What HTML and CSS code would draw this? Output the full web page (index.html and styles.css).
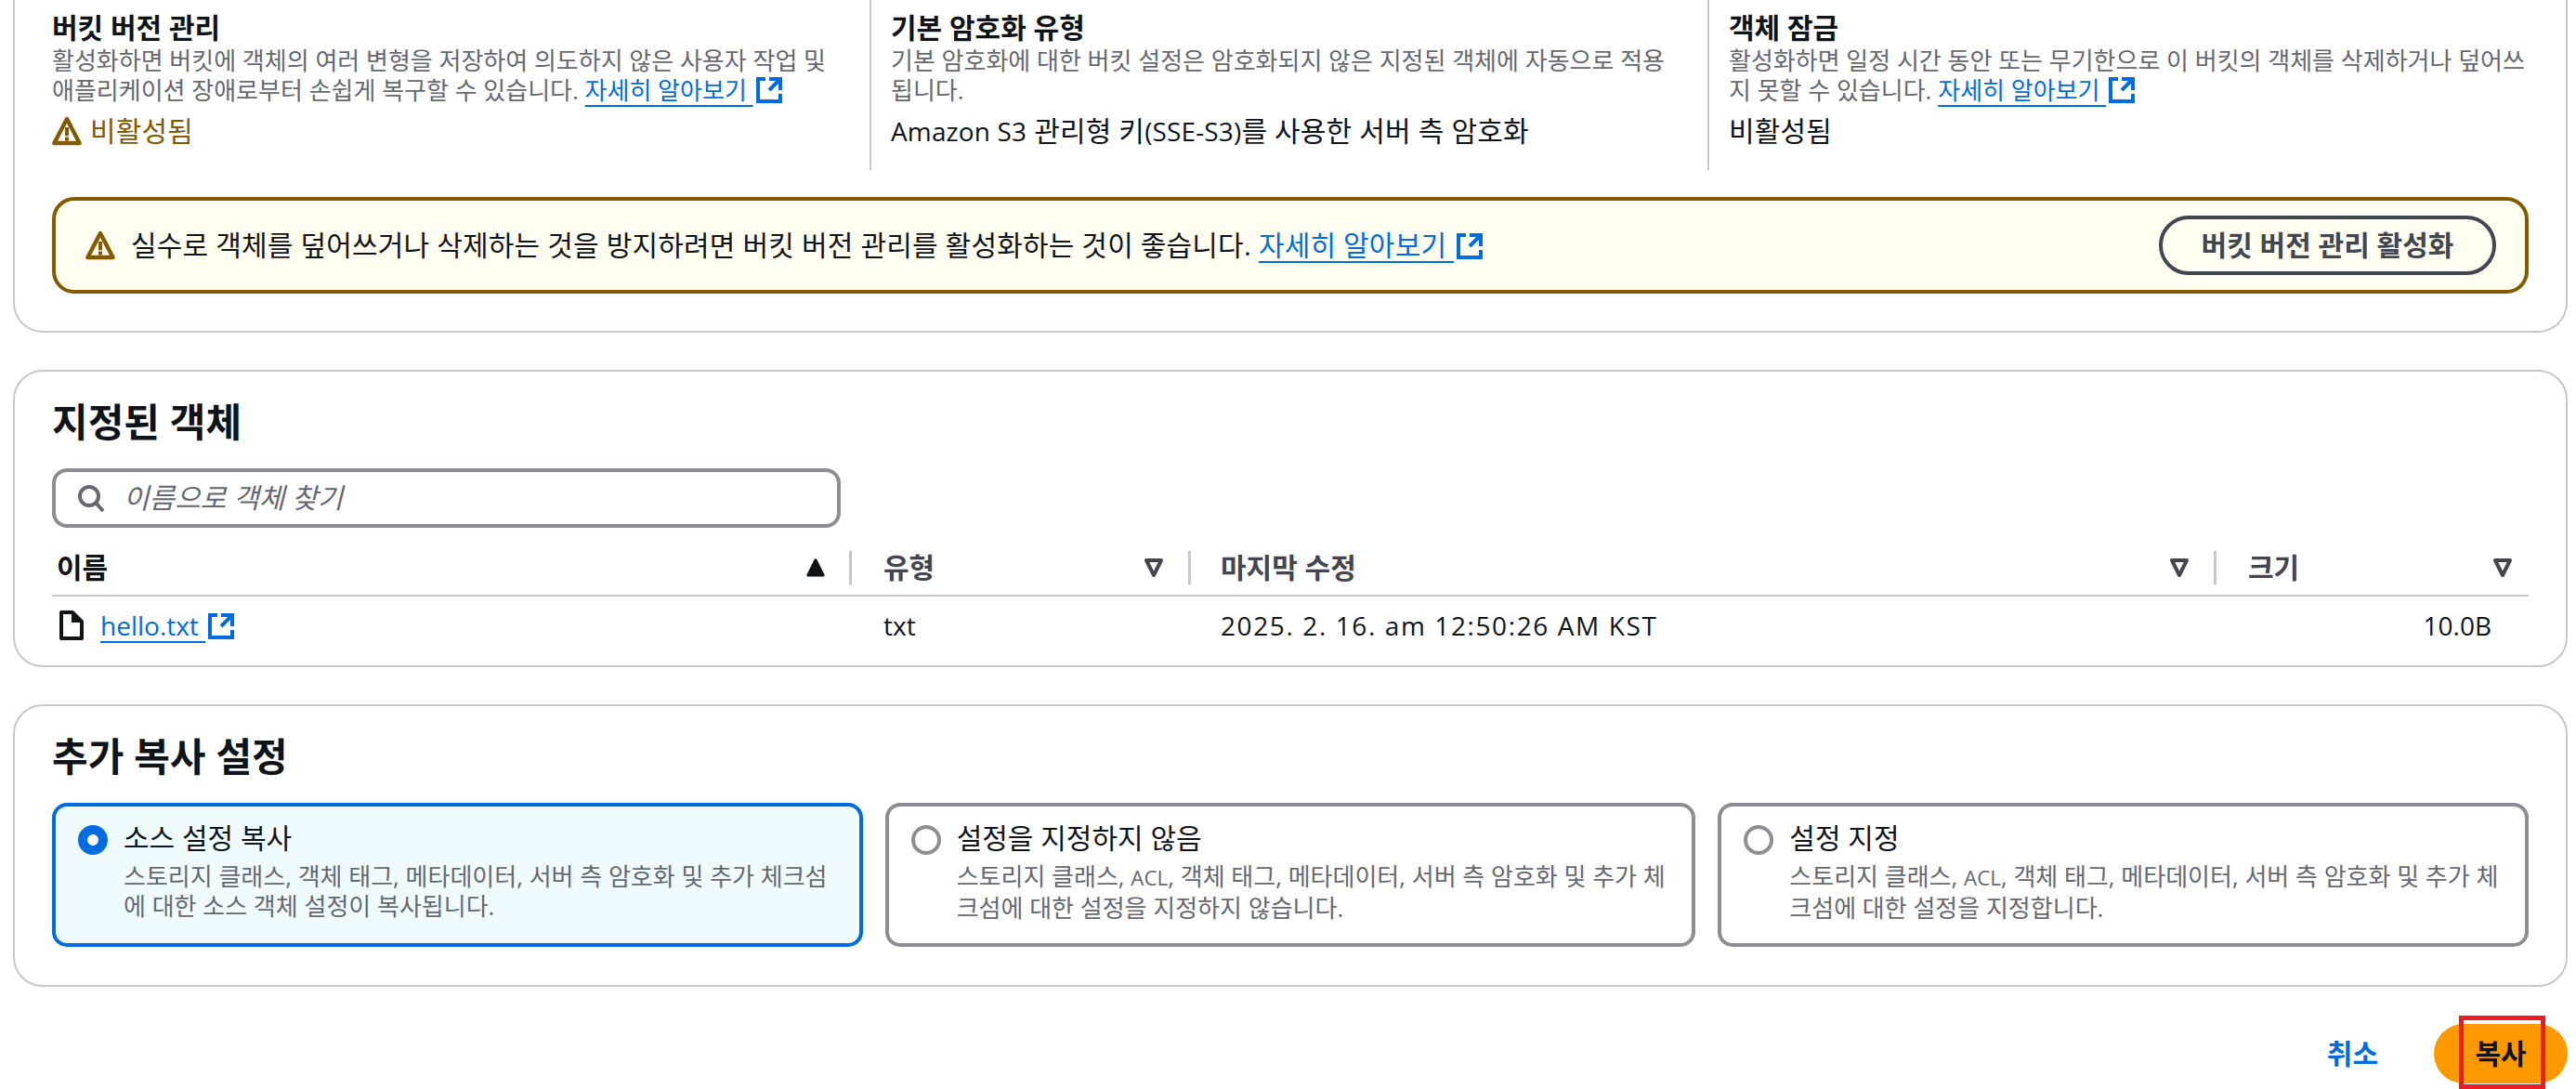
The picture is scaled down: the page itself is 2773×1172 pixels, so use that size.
FILE: index.html
```html
<!DOCTYPE html>
<html lang="ko">
<head>
<meta charset="utf-8">
<title>객체 복사</title>
<link rel="stylesheet" href="styles.css">
</head>
<body>
<svg class="sprites" width="0" height="0" aria-hidden="true">
  <defs>
    <symbol id="i-ext" viewBox="0 0 16 16"><path d="M14 8.01v-6H8M14.02 2 8 8.01M6 2.01H2v12h12v-3.99" fill="none" stroke="currentColor" stroke-width="2"/></symbol>
    <symbol id="i-warn" viewBox="0 0 16 16"><path d="m8 1.5-6.8 13h13.6L8 1.5Z" fill="none" stroke="currentColor" stroke-width="2.2" stroke-linejoin="round"/><path d="M8 6v4.6M7 12.2h2" fill="none" stroke="currentColor" stroke-width="2"/></symbol>
    <symbol id="i-up" viewBox="0 0 16 16"><path d="M8 4 4 12h8L8 4Z" fill="currentColor" stroke="currentColor" stroke-width="1.6" stroke-linejoin="round"/></symbol>
    <symbol id="i-down" viewBox="0 0 16 16"><path d="M4 4h8L8 12 4 4Z" fill="none" stroke="currentColor" stroke-width="2" stroke-linejoin="round"/></symbol>
  </defs>
</svg>
<main class="page">

  <section class="card card-clipped">
    <div class="cols">
      <div class="col">
        <h3 class="col-title">버킷 버전 관리</h3>
        <p class="muted">활성화하면 버킷에 객체의 여러 변형을 저장하여 의도하지 않은 사용자 작업 및 애플리케이션 장애로부터 손쉽게 복구할 수 있습니다. <a class="link" href="#">자세히 알아보기&nbsp;</a><svg class="ext"><use href="#i-ext"/></svg></p>
        <div class="value warn"><svg class="warn-icon"><use href="#i-warn"/></svg><span>비활성됨</span></div>
      </div>
      <div class="col col-div">
        <h3 class="col-title">기본 암호화 유형</h3>
        <p class="muted">기본 암호화에 대한 버킷 설정은 암호화되지 않은 지정된 객체에 자동으로 적용됩니다.</p>
        <div class="value"><span class="lat">Amazon S3</span> 관리형 키<span class="lat">(SSE-S3)</span>를 사용한 서버 측 암호화</div>
      </div>
      <div class="col col-div col-last">
        <h3 class="col-title">객체 잠금</h3>
        <p class="muted">활성화하면 일정 시간 동안 또는 무기한으로 이 버킷의 객체를 삭제하거나 덮어쓰지 못할 수 있습니다. <a class="link" href="#">자세히 알아보기&nbsp;</a><svg class="ext"><use href="#i-ext"/></svg></p>
        <div class="value">비활성됨</div>
      </div>
    </div>
    <div class="alert">
      <svg class="warn-icon alert-icon"><use href="#i-warn"/></svg>
      <div class="alert-text">실수로 객체를 덮어쓰거나 삭제하는 것을 방지하려면 버킷 버전 관리를 활성화하는 것이 좋습니다. <a class="link" href="#">자세히 알아보기&nbsp;</a><svg class="ext"><use href="#i-ext"/></svg></div>
      <button class="btn-normal" type="button">버킷 버전 관리 활성화</button>
    </div>
  </section>

  <section class="card card-objects">
    <h2 class="card-title">지정된 객체</h2>
    <div class="search">
      <svg class="search-icon" viewBox="0 0 16 16"><path d="M7 2a5 5 0 1 0 0 10A5 5 0 0 0 7 2ZM14.5 15l-4-4.5" fill="none" stroke="currentColor" stroke-width="2"/></svg>
      <span class="placeholder">이름으로 객체 찾기</span>
    </div>
    <div class="table">
      <div class="th th-name"><span class="th-active">이름</span><svg class="sort sort-on"><use href="#i-up"/></svg><i class="th-div"></i></div>
      <div class="th th-type"><span>유형</span><svg class="sort"><use href="#i-down"/></svg><i class="th-div"></i></div>
      <div class="th th-date"><span>마지막 수정</span><svg class="sort"><use href="#i-down"/></svg><i class="th-div"></i></div>
      <div class="th th-size"><span>크기</span><svg class="sort"><use href="#i-down"/></svg></div>
      <div class="td td-name">
        <svg class="file-icon" viewBox="0 0 16 16"><path d="M2.5 1h6l5 5v9h-11V1Z" fill="none" stroke="currentColor" stroke-width="2" stroke-linejoin="round"/><path d="M8 1.5v5h5L8 1.5Z" fill="currentColor"/></svg>
        <span class="file-link"><a class="link" href="#">hello.txt&nbsp;</a><svg class="ext"><use href="#i-ext"/></svg></span>
      </div>
      <div class="td td-type">txt</div>
      <div class="td td-date">2025. 2. 16. am 12:50:26 AM KST</div>
      <div class="td td-size">10.0B</div>
    </div>
  </section>

  <section class="card card-options">
    <h2 class="card-title">추가 복사 설정</h2>
    <div class="tiles">
      <div class="tile tile-on">
        <span class="radio radio-on"></span>
        <div class="tile-body">
          <div class="tile-title">소스 설정 복사</div>
          <p class="muted">스토리지 클래스, 객체 태그, 메타데이터, 서버 측 암호화 및 추가 체크섬에 대한 소스 객체 설정이 복사됩니다.</p>
        </div>
      </div>
      <div class="tile">
        <span class="radio"></span>
        <div class="tile-body">
          <div class="tile-title">설정을 지정하지 않음</div>
          <p class="muted">스토리지 클래스, <span class="lat">ACL</span>, 객체 태그, 메타데이터, 서버 측 암호화 및 추가 체크섬에 대한 설정을 지정하지 않습니다.</p>
        </div>
      </div>
      <div class="tile">
        <span class="radio"></span>
        <div class="tile-body">
          <div class="tile-title">설정 지정</div>
          <p class="muted">스토리지 클래스, <span class="lat">ACL</span>, 객체 태그, 메타데이터, 서버 측 암호화 및 추가 체크섬에 대한 설정을 지정합니다.</p>
        </div>
      </div>
    </div>
  </section>

  <footer class="actions">
    <a class="cancel" href="#">취소</a>
    <div class="primary-wrap">
      <button class="btn-primary" type="button">복사</button>
      <span class="highlight"></span>
    </div>
  </footer>
</main>
</body>
</html>
```
FILE: styles.css
```css
* { box-sizing: border-box; }
html, body { margin: 0; padding: 0; background: #fff; }
body {
  font-family: "Open Sans", "Noto Sans CJK KR", sans-serif;
  font-size: 30px;
  line-height: 40px;
  color: #0f141a;
  overflow: hidden;
  height: 1172px;
}
.sprites { position: absolute; }
h2, h3, p { margin: 0; }
.page { padding: 0 9px 0 14px; }
.lat { font-size: 0.933em; }
.muted .lat { font-size: 0.86em; }

.card {
  border: 2px solid #c6c6cd;
  border-radius: 32px;
  padding: 0 40px 40px;
  margin-bottom: 40px;
  background: #fff;
}
.card-clipped {
  border-top: none;
  border-radius: 0 0 32px 32px;
  height: 358px;
}
.card-objects { height: 320px; padding-top: 30px; padding-bottom: 0; }
.card-options { height: 304px; padding-top: 30px; margin-bottom: 0; }

.cols {
  display: grid;
  grid-template-columns: 880px 902px 1fr;
  height: 183px;
  margin-bottom: 29px;
}
.col { padding: 10px 40px 0 0; }
.col-div { border-left: 2px solid #c6c6cd; padding-left: 21px; }
.col-last { padding-right: 0; }
.col-title { font-size: 30px; line-height: 40px; font-weight: 700; }
.muted { font-size: 26px; line-height: 32px; color: #656871; }
.col .muted { margin-top: -1px; }
.value { margin-top: 8px; letter-spacing: 0.15px; }
.value.warn { display: flex; align-items: center; gap: 9px; color: #855900; }

.link { color: #006ce0; text-decoration: underline; text-decoration-thickness: 2px; text-underline-offset: 6px; }
.ext { display: inline-block; width: 32px; height: 32px; color: #006ce0; vertical-align: -6px; margin-left: 1px; }
.warn-icon { width: 32px; height: 32px; color: #855900; flex: none; }

.alert {
  display: flex;
  align-items: center;
  height: 104px;
  border: 4px solid #855900;
  border-radius: 24px;
  background: #fffef0;
  padding: 0 31px 0 32px;
}
.alert-icon { margin-right: 17px; }
.alert-text { flex: 1; letter-spacing: 0.16px; }
.btn-normal {
  font: inherit;
  font-weight: 700;
  color: #424650;
  height: 64px;
  width: 363px;
  border: 4px solid #424650;
  border-radius: 40px;
  background: transparent;
  padding: 0;
}

.card-title { font-size: 42px; line-height: 48px; font-weight: 700; }
.search {
  display: flex;
  align-items: center;
  width: 849px;
  height: 64px;
  margin-top: 26px;
  border: 4px solid #8c8c94;
  border-radius: 16px;
  padding-left: 22px;
}
.search-icon { width: 32px; height: 32px; color: #656871; flex: none; }
.placeholder { margin-left: 19px; font-style: italic; color: #656871; }

.table {
  display: grid;
  grid-template-columns: 861px 365px 1104px 336px;
  margin-top: 26px;
}
.th {
  display: flex;
  align-items: center;
  height: 48px;
  padding: 0 0 12px 34px;
  border-bottom: 2px solid #c6c6cd;
  font-weight: 700;
  color: #424650;
}
.th .sort { margin-left: auto; }
.th-name { padding-left: 5px; }
.th-name .th-div { margin-left: 20px; }
.th-active { color: #0f141a; }
.th-div { width: 3px; height: 36px; background: #c6c6cd; margin-left: 21px; flex: none; }
.th-date { padding-left: 32px; }
.th-size { padding-right: 12px; }
.sort { width: 32px; height: 32px; color: #424650; flex: none; }
.sort-on { color: #0f141a; }
.td { height: 62px; display: flex; align-items: center; padding-left: 34px; font-size: 28px; }
.td-name { padding-left: 0; }
.td-date { padding-left: 32px; letter-spacing: 1.6px; }
.td-size { justify-content: flex-end; padding-right: 40px; }
.file-icon { width: 32px; height: 32px; margin-left: 5px; color: #0f141a; flex: none; }
.file-link { margin-left: 15px; }

.tiles {
  display: grid;
  grid-template-columns: repeat(3, 1fr);
  gap: 24px;
  margin-top: 26px;
}
.tile {
  display: flex;
  gap: 17px;
  height: 155px;
  border: 4px solid #8c8c94;
  border-radius: 16px;
  padding: 14px 24px 0;
}
.tile-on { border-color: #006ce0; background: #f0fbff; }
.radio {
  width: 32px;
  height: 32px;
  margin-top: 6px;
  border: 4px solid #8c8c94;
  border-radius: 50%;
  background: #fff;
  flex: none;
}
.radio-on { border: 10px solid #006ce0; }
.tile-title { margin-bottom: 5px; }

.actions {
  display: flex;
  justify-content: flex-end;
  align-items: center;
  margin-top: 40px;
}
.cancel { color: #006ce0; font-weight: 700; text-decoration: none; margin-right: 60px; }
.primary-wrap { position: relative; }
.btn-primary {
  display: block;
  font: inherit;
  font-weight: 700;
  color: #0f141a;
  width: 144px;
  height: 64px;
  border: none;
  border-radius: 40px;
  background: #ff9900;
  padding: 0;
}
.highlight {
  position: absolute;
  left: 27px;
  top: -9px;
  width: 93px;
  height: 79px;
  border: 5px solid #ed1c24;
  box-shadow: inset 0 4px 0 #fff, inset 0 -1px 0 #fff;
}
```
